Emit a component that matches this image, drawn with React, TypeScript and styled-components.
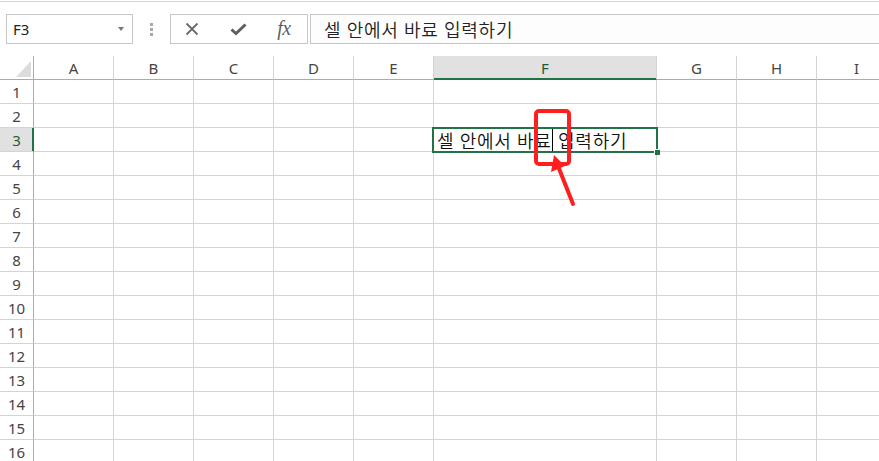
import React from 'react';
import styled, {createGlobalStyle, css} from 'styled-components';

const GRID = '#d4d4d4';
const HEAD_LINE = '#ababab';
const BOX_LINE = '#c6c6c6';
const GREEN = '#217346';
const UI_FONT = `"Noto Sans", "Open Sans", "DejaVu Sans", sans-serif`;
const KR_FONT = `"Noto Sans CJK KR", "Noto Sans", sans-serif`;

const TEXT = '셀 안에서 바료 입력하기';

const columns = [
  {label: 'A', width: 80},
  {label: 'B', width: 80},
  {label: 'C', width: 80},
  {label: 'D', width: 80},
  {label: 'E', width: 80},
  {label: 'F', width: 223},
  {label: 'G', width: 80},
  {label: 'H', width: 80},
  {label: 'I', width: 80},
];
const rowCount = 16;
const activeCol = 'F';
const activeRow = 3;

const GlobalStyle = createGlobalStyle`
  html, body {
    margin: 0;
    padding: 0;
    background: #fff;
    overflow: hidden;
  }
`;

const Page = styled.div`
  position: relative;
  width: 879px;
  height: 461px;
  overflow: hidden;
  box-sizing: border-box;
  padding-top: 1px;
  background: #fff;
  font-family: ${UI_FONT};
`;

const TopRule = styled.div`
  height: 1px;
  background: #d6d6d6;
`;

const FormulaBar = styled.div`
  display: flex;
  height: 30px;
  margin-top: 12px;
  padding-left: 6px;
`;

const NameBox = styled.div`
  flex: 0 0 127px;
  box-sizing: border-box;
  border: 1px solid ${BOX_LINE};
  display: flex;
  align-items: center;
  justify-content: space-between;
  padding: 0 8px 0 6px;
  font-size: 15px;
  color: #222;
`;

const DropArrow = styled.span`
  width: 0;
  height: 0;
  border-left: 3.5px solid transparent;
  border-right: 3.5px solid transparent;
  border-top: 4px solid #777;
`;

const Splitter = styled.div`
  flex: 0 0 37px;
  display: flex;
  flex-direction: column;
  align-items: center;
  justify-content: center;
  gap: 2px;
`;

const Dot = styled.span`
  width: 3px;
  height: 3px;
  background: #a8a8a8;
`;

const FxBox = styled.div`
  flex: 0 0 138px;
  box-sizing: border-box;
  border: 1px solid ${BOX_LINE};
  display: flex;
  align-items: center;
  gap: 6px;
  padding-left: 1px;
`;

const FxSlot = styled.div`
  flex: 0 0 40px;
  height: 100%;
  display: flex;
  align-items: center;
  justify-content: center;
  color: #666;
`;

const FxLabel = styled.span`
  font-family: "Liberation Serif", "DejaVu Serif", serif;
  font-style: italic;
  font-size: 20px;
  color: #5f5f5f;
  letter-spacing: -0.5px;
  margin-top: -2px;
`;

const KoreanText = css`
  font-family: ${KR_FONT};
  font-size: 18px;
  font-weight: 350;
  letter-spacing: 0.7px;
  word-spacing: 0.8px;
  white-space: pre;
`;

const FormulaInput = styled.div`
  flex: 1;
  margin-left: 2px;
  box-sizing: border-box;
  border: 1px solid ${BOX_LINE};
  border-right: none;
  background: #fdfdfd;
  display: flex;
  align-items: center;
  padding-left: 13px;
  color: #222;
  ${KoreanText}
`;

const Sheet = styled.div`
  display: flex;
  flex-direction: column;
  margin-top: 12px;
`;

const Row = styled.div`
  display: flex;
  flex: 0 0 24px;
  height: 24px;
`;

const ColHeader = styled.div<{$w: number; $active?: boolean}>`
  flex: 0 0 ${p => p.$w}px;
  box-sizing: border-box;
  height: 24px;
  border-right: 1px solid ${GRID};
  border-bottom: 1px solid ${HEAD_LINE};
  display: flex;
  align-items: center;
  justify-content: center;
  font-size: 15px;
  color: #444;
  background: #fff;
  ${p => p.$active && css`
    background: #e1e1e1;
    color: #1f5a38;
    border-bottom-color: ${GREEN};
    box-shadow: inset 0 -1px 0 ${GREEN};
  `}
`;

const Corner = styled.div`
  flex: 0 0 34px;
  box-sizing: border-box;
  height: 24px;
  border-right: 1px solid ${HEAD_LINE};
  border-bottom: 1px solid ${HEAD_LINE};
  display: flex;
  align-items: flex-end;
  justify-content: flex-end;
  padding: 0 2px 2px 0;
`;

const CornerMark = styled.span`
  width: 15px;
  height: 16px;
  background: #dcdcdc;
  clip-path: polygon(100% 0, 100% 100%, 0 100%);
`;

const RowHeader = styled.div<{$active?: boolean}>`
  flex: 0 0 34px;
  box-sizing: border-box;
  height: 24px;
  border-right: 1px solid ${HEAD_LINE};
  border-bottom: 1px solid ${GRID};
  display: flex;
  align-items: center;
  justify-content: center;
  font-size: 15px;
  color: #444;
  ${p => p.$active && css`
    background: #e1e1e1;
    color: #1f5a38;
    border-right-color: ${GREEN};
    box-shadow: inset -1px 0 0 ${GREEN};
  `}
`;

const Cell = styled.div<{$w: number}>`
  position: relative;
  flex: 0 0 ${p => p.$w}px;
  box-sizing: border-box;
  height: 24px;
  border-right: 1px solid ${GRID};
  border-bottom: 1px solid ${GRID};
`;

const CellText = styled.div`
  position: relative;
  z-index: 2;
  display: flex;
  align-items: center;
  height: 100%;
  padding-left: 3px;
  color: #111;
  ${KoreanText}
`;

const Caret = styled.span`
  align-self: flex-start;
  flex: 0 0 1px;
  height: 22px;
  margin-top: 1px;
  background: #000;
`;

const SelectionFrame = styled.div`
  position: absolute;
  z-index: 3;
  left: -2px;
  top: -1px;
  width: 226px;
  height: 26px;
  box-sizing: border-box;
  border: 2px solid ${GREEN};
  pointer-events: none;
`;

const FillHandle = styled.span`
  position: absolute;
  right: -4px;
  bottom: -4px;
  width: 5px;
  height: 5px;
  background: ${GREEN};
  border-left: 1px solid #fff;
  border-top: 1px solid #fff;
`;

const Annotation = styled.svg`
  position: absolute;
  left: 0;
  top: 0;
  z-index: 10;
  pointer-events: none;
`;

const CancelIcon = () => (
  <svg width="14" height="14" viewBox="0 0 14 14">
    <path d="M1.5 1.5 L12.5 12.5 M12.5 1.5 L1.5 12.5" stroke="#6a6a6a" strokeWidth="1.8" fill="none"/>
  </svg>
);

const EnterIcon = () => (
  <svg width="17" height="14" viewBox="0 0 17 14">
    <path d="M1.5 7.5 L6 11.5 L15.5 2.5" stroke="#5e5e5e" strokeWidth="3" fill="none" strokeLinejoin="miter"/>
  </svg>
);

const ActiveCell: React.FC = () => {
  const cut = TEXT.indexOf(' 입');
  return (
    <>
      <CellText>
        <span>{TEXT.slice(0, cut)}</span>
        <Caret/>
        <span>{TEXT.slice(cut)}</span>
      </CellText>
      <SelectionFrame>
        <FillHandle/>
      </SelectionFrame>
    </>
  );
};

const App: React.FC = () => {
  return (
    <Page>
      <GlobalStyle/>
      <TopRule/>
      <FormulaBar>
        <NameBox>
          <span>F3</span>
          <DropArrow/>
        </NameBox>
        <Splitter>
          <Dot/><Dot/><Dot/>
        </Splitter>
        <FxBox>
          <FxSlot><CancelIcon/></FxSlot>
          <FxSlot><EnterIcon/></FxSlot>
          <FxSlot><FxLabel>fx</FxLabel></FxSlot>
        </FxBox>
        <FormulaInput>{TEXT}</FormulaInput>
      </FormulaBar>

      <Sheet>
        <Row>
          <Corner><CornerMark/></Corner>
          {columns.map(col => (
            <ColHeader key={col.label} $w={col.width} $active={col.label === activeCol}>
              {col.label}
            </ColHeader>
          ))}
        </Row>
        {Array.from({length: rowCount}, (_, i) => i + 1).map(r => (
          <Row key={r}>
            <RowHeader $active={r === activeRow}>{r}</RowHeader>
            {columns.map(col => (
              <Cell key={col.label} $w={col.width}>
                {r === activeRow && col.label === activeCol && <ActiveCell/>}
              </Cell>
            ))}
          </Row>
        ))}
      </Sheet>

      <Annotation width="879" height="461" viewBox="0 0 879 461">
        <rect x="536" y="111" width="33" height="53" rx="3" fill="none" stroke="#ff1f1f" strokeWidth="4"/>
        <line x1="573" y1="204" x2="558" y2="166" stroke="#ff1f1f" strokeWidth="4" strokeLinecap="round"/>
        <polygon points="554,155 551,172 565,166" fill="#ff1f1f"/>
      </Annotation>
    </Page>
  );
};

export default App;
